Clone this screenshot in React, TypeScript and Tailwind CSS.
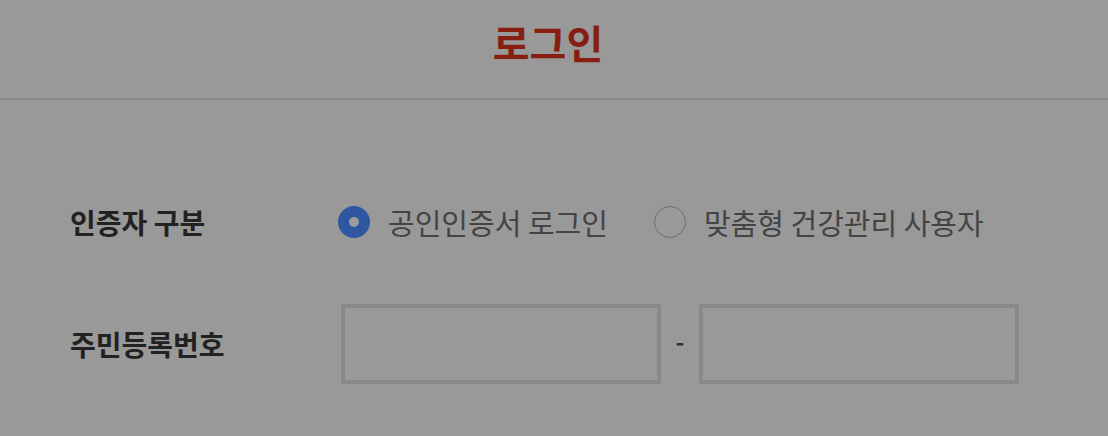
export default function App() {
  return (
    <div
      className="w-[1108px] h-[436px] bg-[#999999] overflow-hidden"
      style={{ fontFamily: '"Noto Sans CJK KR", "Noto Sans", sans-serif' }}
    >
      <div className="h-[100px] flex items-center justify-center pr-[12px] border-b-2 border-[#888888]">
        <h1 className="text-[40px] font-bold text-[#861f12] leading-none -mt-[14px]">로그인</h1>
      </div>

      <div className="pl-[70px] pt-[104px]">
        <div className="flex items-center h-[36px]">
          <div className="w-[268px] text-[28px] font-bold text-[#222222] leading-none">인증자 구분</div>
          <label className="flex items-center">
            <span className="w-[32px] h-[32px] rounded-full bg-[#2f57a1] flex items-center justify-center">
              <span className="w-[10px] h-[10px] rounded-full bg-[#9c9c9c]" />
            </span>
            <span className="ml-[18px] text-[29px] text-[#444444] leading-none">공인인증서 로그인</span>
          </label>
          <label className="flex items-center ml-[46px]">
            <span className="w-[32px] h-[32px] rounded-full border border-[#6f6f6f]" />
            <span className="ml-[18px] text-[29px] text-[#444444] leading-none">맞춤형 건강관리 사용자</span>
          </label>
        </div>

        <div className="flex items-center mt-[64px]">
          <div className="w-[271px] text-[28px] font-bold text-[#222222] leading-none">주민등록번호</div>
          <input className="w-[320px] h-[80px] border-4 border-[#888888] bg-transparent outline-none" />
          <span className="w-[38px] text-center text-[24px] font-bold text-[#333333] leading-none -mt-[6px]">-</span>
          <input className="w-[320px] h-[80px] border-4 border-[#888888] bg-transparent outline-none" />
        </div>
      </div>
    </div>
  )
}
